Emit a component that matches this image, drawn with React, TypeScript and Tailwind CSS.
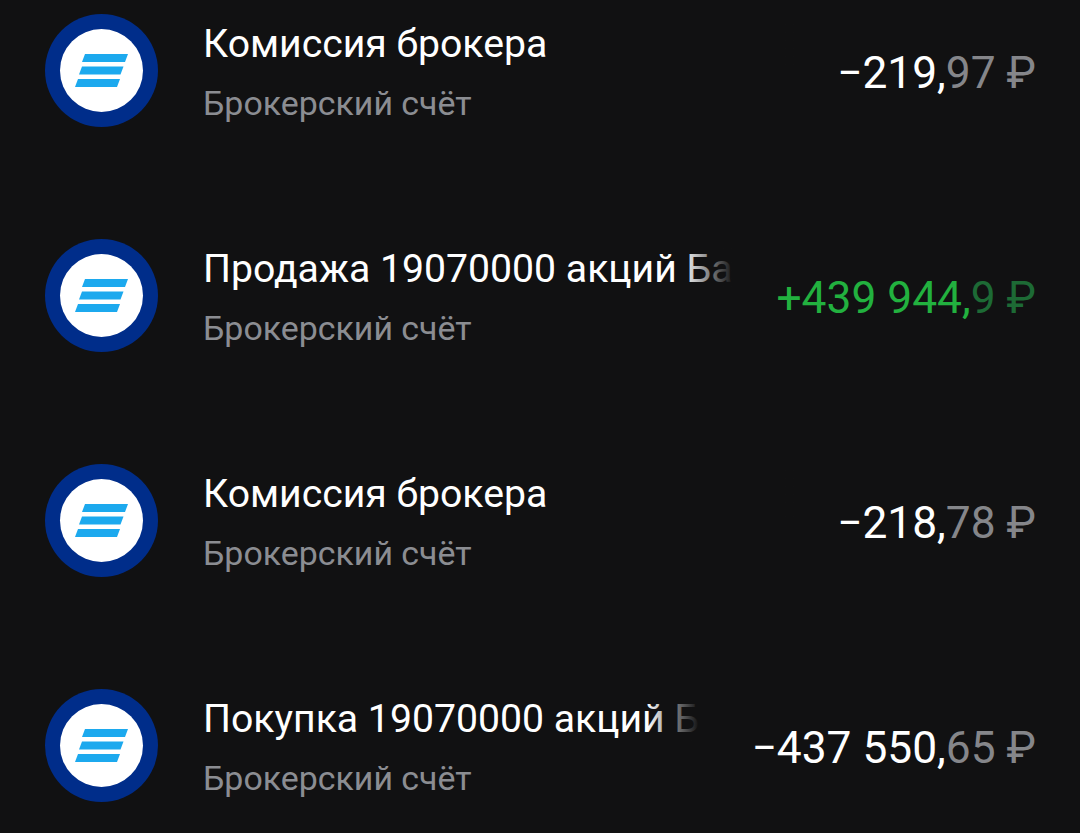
const rows = [
  { title: "Комиссия брокера", whole: "−219,", frac: "97", gap: "ml-[42px]", green: false },
  { title: "Продажа 19070000 акций Банк ВТБ", whole: "+439 944,", frac: "9", gap: "ml-[42px]", green: true },
  { title: "Комиссия брокера", whole: "−218,", frac: "78", gap: "ml-[42px]", green: false },
  { title: "Покупка 19070000 акций Банк ВТБ", whole: "−437 550,", frac: "65", gap: "ml-[52px]", green: false },
];

function BrokerIcon() {
  return (
    <div className="flex h-[113px] w-[113px] shrink-0 items-center justify-center rounded-full bg-[#002d8a]">
      <div className="flex h-[83px] w-[83px] items-center justify-center rounded-full bg-white">
        <svg width="53" height="33" viewBox="0 0 53 33">
          <polygon points="10,0 53,0 50,8 7,8" fill="#1ca9ee" />
          <polygon points="7,12.5 48.5,12.5 45.5,20.5 4,20.5" fill="#1ca9ee" />
          <polygon points="3,25 45,25 42,33 0,33" fill="#1ca9ee" />
        </svg>
      </div>
    </div>
  );
}

export default function App() {
  return (
    <div
      className="h-[833px] w-[1080px] overflow-hidden bg-[#111112]"
      style={{ fontFamily: "Roboto, 'Noto Sans', sans-serif" }}
    >
      <div className="-mt-[42px]">
        {rows.map((r, i) => (
          <div key={i} className="flex h-[225px] items-center pl-[45px] pr-[44px]">
            <BrokerIcon />
            <div className="ml-[45px] flex min-w-0 flex-1 flex-col pt-[7px]">
              <div className="relative overflow-hidden whitespace-nowrap text-[39.2px] leading-[50px] text-white">
                {r.title}
                <div className="absolute inset-y-0 right-0 w-[52px] bg-gradient-to-r from-[#11111200] to-[#111112]" />
              </div>
              <div className="mt-[10px] whitespace-nowrap text-[33.9px] leading-[50px] text-[#8b8d92]">
                Брокерский счёт
              </div>
            </div>
            <div
              className={`${r.gap} mt-[4px] shrink-0 whitespace-nowrap text-[44.3px] leading-[56px] ${
                r.green ? "text-[#22b13f]" : "text-white"
              }`}
            >
              {r.whole}
              <span className={r.green ? "text-[#1d6a35]" : "text-[#85868a]"}>
                {r.frac} ₽
              </span>
            </div>
          </div>
        ))}
      </div>
    </div>
  );
}
